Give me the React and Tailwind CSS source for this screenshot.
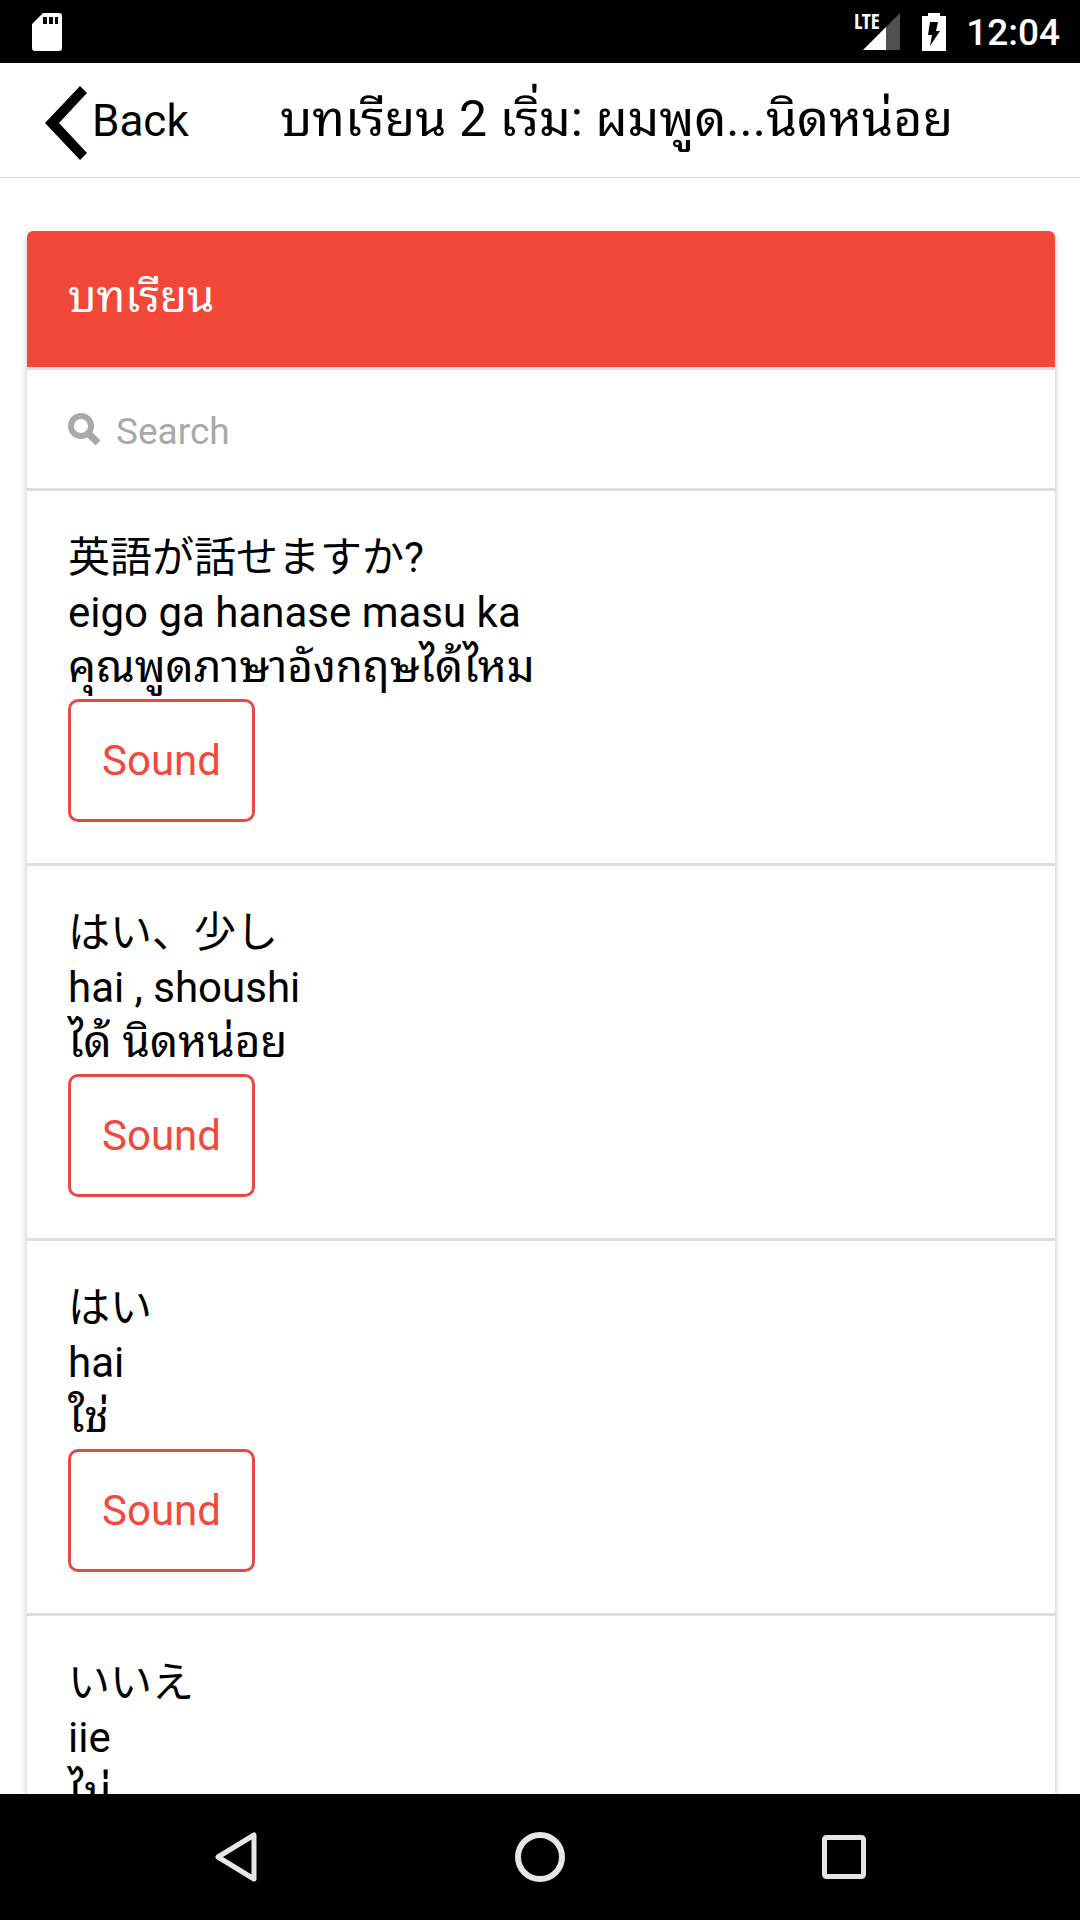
import React, { useState } from 'react';

const PHRASES = [
  { id: 1, japanese: '英語が話せますか?', romaji: 'eigo ga hanase masu ka', thai: 'คุณพูดภาษาอังกฤษได้ไหม' },
  { id: 2, japanese: 'はい、少し', romaji: 'hai , shoushi', thai: 'ได้ นิดหน่อย' },
  { id: 3, japanese: 'はい', romaji: 'hai', thai: 'ใช่' },
  { id: 4, japanese: 'いいえ', romaji: 'iie', thai: 'ไม่' },
];

function StatusBar() {
  return (
    <div className="flex h-[63px] shrink-0 items-center bg-black pl-[32px] pr-[20px] text-white">
      <svg className="h-[38px] w-[30px]" viewBox="0 0 30 38" fill="currentColor">
        <path
          fillRule="evenodd"
          d="M11 0H27a3 3 0 0 1 3 3V35a3 3 0 0 1-3 3H3a3 3 0 0 1-3-3V11ZM11 4v7h4V4Zm6 0v7h4V4Zm6 0v7h3V4Z"
        />
      </svg>
      <div className="ml-auto flex items-center">
        <svg className="mr-[22px] h-[38px] w-[46px]" viewBox="0 0 46 38">
          <path d="M46 0V37H32V14Z" fill="#505050" />
          <path d="M32 14V37H9Z" fill="white" />
          <text x="0" y="16" fill="white" className="font-['Open_Sans_Condensed','DejaVu_Sans_Condensed','Liberation_Sans_Narrow',Roboto,sans-serif] text-[21px] font-bold">
            LTE
          </text>
        </svg>
        <svg className="mr-[20px] h-[38px] w-[24px]" viewBox="0 0 24 38">
          <path d="M6 0H18V3H24V38H0V3H6Z" fill="white" />
          <path d="M8 9H16L14 18H18L8 33L10 22H6Z" fill="black" />
        </svg>
        <span className="pt-[2px] text-[37px] leading-[44px] font-medium">12:04</span>
      </div>
    </div>
  );
}

function Toolbar() {
  return (
    <header className="flex h-[115px] shrink-0 items-center border-b border-[#d8d8d8] bg-white pl-[45px]">
      <button type="button" className="flex w-[235px] shrink-0 items-center gap-[5px] pt-[2px] text-[44px] leading-[56px]">
        <svg className="mt-[4px] h-[74px] w-[42px]" viewBox="0 0 42 74" fill="currentColor">
          <path d="M35 0L42 7L14 37L42 67L35 74L0 37Z" />
        </svg>
        Back
      </button>
      <h1 className="truncate pb-[2px] text-[50px] leading-[96px]">บทเรียน 2 เริ่ม: ผมพูด...นิดหน่อย</h1>
    </header>
  );
}

function SearchBox({ value, onChange }) {
  return (
    <label className="flex h-[121px] items-center gap-[16px] border-b-3 border-[#dedede] px-[41px] text-[#a9a9a9]">
      <svg className="h-[32px] w-[32px]" viewBox="0 0 32 32" fill="none" stroke="currentColor">
        <circle cx="13" cy="13" r="10" strokeWidth="6" />
        <path d="M20 20L30 30" strokeWidth="7" />
      </svg>
      <input
        type="search"
        aria-label="Search"
        placeholder="Search"
        value={value}
        onChange={e => onChange(e.target.value)}
        className="min-w-0 flex-1 bg-transparent pt-[5px] text-[37px] leading-[48px] text-black outline-none placeholder:text-[#a9a9a9]"
      />
    </label>
  );
}

function PhraseItem({ phrase }) {
  return (
    <li className="border-b-3 border-[#dedede] px-[41px] pt-[39px] pb-[41px]">
      <p lang="ja">{phrase.japanese}</p>
      <p>{phrase.romaji}</p>
      <p lang="th" className="text-[44px] leading-[55px]">{phrase.thai}</p>
      <button
        type="button"
        className="mt-[4px] h-[123px] rounded-[10px] border-3 border-[#e64b43] px-[31px] text-[#f04a3e]"
      >
        Sound
      </button>
    </li>
  );
}

function NavigationBar() {
  return (
    <nav className="grid h-[126px] shrink-0 grid-cols-3 bg-black px-[84px] text-[#e6e6e6]">
      <button type="button" aria-label="Back" className="flex items-center justify-center">
        <svg className="h-[50px] w-[42px]" viewBox="0 0 42 50" fill="none" stroke="currentColor" strokeWidth="5" strokeLinejoin="round">
          <path d="M39 3V47L3 25Z" />
        </svg>
      </button>
      <button type="button" aria-label="Home" className="flex items-center justify-center">
        <svg className="h-[50px] w-[50px]" viewBox="0 0 50 50" fill="none" stroke="currentColor" strokeWidth="6">
          <circle cx="25" cy="25" r="22" />
        </svg>
      </button>
      <button type="button" aria-label="Overview" className="flex items-center justify-center">
        <svg className="h-[44px] w-[44px]" viewBox="0 0 44 44" fill="none" stroke="currentColor" strokeWidth="5">
          <rect x="2.5" y="2.5" width="39" height="39" rx="2" />
        </svg>
      </button>
    </nav>
  );
}

export default function App() {
  const [query, setQuery] = useState('');
  const phrases = PHRASES.filter(p => `${p.japanese} ${p.romaji} ${p.thai}`.includes(query));

  return (
    <div className="flex h-screen flex-col bg-white font-[Roboto,'Noto_Sans_CJK_JP','Noto_Sans_Thai_Looped','Noto_Looped_Thai',Loma,Waree,Garuda,'Noto_Sans_Thai',sans-serif] text-black">
      <StatusBar />
      <Toolbar />
      <main className="min-h-0 flex-1 overflow-hidden pt-[53px] pr-[25px] pl-[27px]">
        <section className="rounded-[6px] bg-white text-[42px] leading-[55px] shadow-[0_3px_6px_rgba(0,0,0,0.25)]">
          <h2 className="h-[139px] rounded-t-[6px] border-b-3 border-[#dedede] bg-[#f1483a] bg-clip-padding px-[41px] pt-[39px] text-[44px] leading-[55px] text-white">
            บทเรียน
          </h2>
          <SearchBox value={query} onChange={setQuery} />
          <ul>
            {phrases.map(phrase => (
              <PhraseItem key={phrase.id} phrase={phrase} />
            ))}
          </ul>
        </section>
      </main>
      <NavigationBar />
    </div>
  );
}
